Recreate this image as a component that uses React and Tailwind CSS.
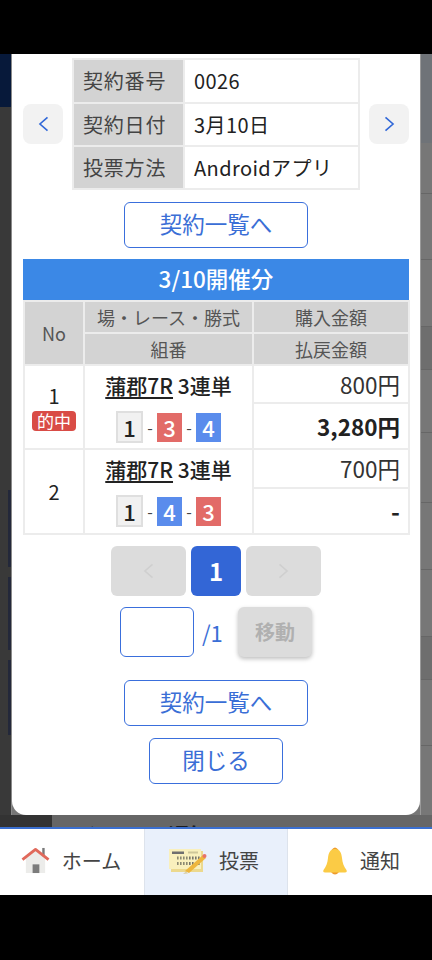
const FONT = "font-['Noto_Sans_CJK_JP','Noto_Sans',sans-serif]";

function Chevron({ dir, className }) {
  return (
    <svg viewBox="0 0 12 18" className={className} fill="none" stroke="currentColor" strokeWidth="1.8">
      <path d={dir === 'left' ? 'M10.5 1.5 L2 9 L10.5 16.5' : 'M1.5 1.5 L10 9 L1.5 16.5'} />
    </svg>
  );
}

function HomeIcon() {
  return (
    <svg viewBox="0 0 30 28" className="w-[29px] h-[27px]">
      <rect x="22" y="1" width="2.5" height="9" fill="#7a7a7a" />
      <path d="M5 12 L15 3 L25 12 V27 H5 Z" fill="#ececea" />
      <path d="M1.5 13 L15 2.5 L28.5 13" fill="none" stroke="#e0695b" strokeWidth="3" strokeLinejoin="round" />
      <rect x="12" y="18" width="7" height="9" fill="#7c7c7c" />
    </svg>
  );
}

function TicketIcon() {
  const cols = [9, 12, 15, 18, 21, 24, 27, 30];
  return (
    <svg viewBox="0 0 38 26" className="w-[38px] h-[26px]">
      <rect x="2" y="3" width="32" height="21" fill="#ecd98e" />
      <rect x="0" y="1" width="32" height="20" fill="#f9f0bd" />
      <rect x="3" y="3.5" width="12" height="2.5" fill="#6f6f6f" />
      <rect x="19" y="3.5" width="10" height="2" fill="#cfc79a" />
      {cols.map((x) => (
        <rect key={x} x={x - 1} y="8.5" width="1.6" height="3" fill={x < 20 ? '#8c8a72' : '#77756a'} />
      ))}
      {cols.map((x) => (
        <rect key={x} x={x - 1} y="14" width="1.6" height="3" fill={x < 20 ? '#8c8a72' : '#77756a'} />
      ))}
      <path d="M34 7 L37 10 L20 25 L16 23 Z" fill="#eeb63e" />
      <path d="M17 23.5 L14 26 L19 25.5 Z" fill="#d9cfa6" />
      <circle cx="35.5" cy="8" r="2" fill="#e8736a" />
    </svg>
  );
}

function BellIcon() {
  return (
    <svg viewBox="0 0 26 30" className="w-[26px] h-[30px]">
      <path d="M9 26 Q13 31 17 26 Z" fill="#ee9b2d" />
      <path d="M9.5 4 Q13 -1 16.5 4 Z" fill="#ee9b2d" />
      <path d="M13 3 C8 3 6.5 7 6 12 C5.6 17 4 21 1.5 24 Q0.6 26.5 3 26.5 H23 Q25.4 26.5 24.5 24 C22 21 20.4 17 20 12 C19.5 7 18 3 13 3 Z" fill="#fbcb45" />
    </svg>
  );
}

function OutlineButton({ className, children }) {
  return (
    <button className={`block mx-auto pb-[3px] border-[1.5px] border-[#3a6fdc] rounded-[6px] bg-white text-[22.5px] leading-none text-[#3a6ed6] ${className}`}>
      {children}
    </button>
  );
}

function InfoRow({ label, value, height }) {
  return (
    <tr className={height}>
      <th className="border-2 border-[#ececec] bg-[#d3d3d3] pl-[9px] text-left font-normal text-[#444] tracking-[0.8px]">{label}</th>
      <td className="border-2 border-[#ececec] pl-[9px] text-[#222] tracking-[0.4px]">{value}</td>
    </tr>
  );
}

function Num({ n, kind }) {
  const styles = {
    white: 'w-[27px] h-[32px] bg-[#f1f1f1] border-2 border-[#dfdfdf] text-[#222]',
    red: 'w-[25px] h-[29px] bg-[#e26b68] text-white',
    blue: 'w-[25px] h-[29px] bg-[#5a8cec] text-white',
  };
  return <span className={`flex items-center justify-center text-[22px] leading-none font-medium ${styles[kind]}`}>{n}</span>;
}

function Combo({ nums }) {
  const kinds = { 1: 'white', 3: 'red', 4: 'blue' };
  return (
    <div className="flex items-center justify-center h-[32px]">
      <Num n={nums[0]} kind={kinds[nums[0]]} />
      <span className="w-[14px] text-center text-[16px] text-[#444] leading-none">-</span>
      <Num n={nums[1]} kind={kinds[nums[1]]} />
      <span className="w-[14px] text-center text-[16px] text-[#444] leading-none">-</span>
      <Num n={nums[2]} kind={kinds[nums[2]]} />
    </div>
  );
}

const cell = 'border-2 border-[#ececec]';
const head = 'border-2 border-[#ececec] bg-[#d3d3d3] font-normal text-[18px] leading-none text-[#555]';

function RaceRows({ no, hit, nums, buy, pay, payBold, topHeight }) {
  return (
    <>
      <tr className={topHeight}>
        <td rowSpan={2} className={`${cell} text-center align-middle text-[#222] text-[20px] leading-none`}>
          <div className={hit ? 'pt-[3px]' : ''}>{no}</div>
          {hit && (
            <div className="mx-auto mt-[5px] w-[44px] h-[20px] rounded-[4px] bg-[#d94c46] text-white text-[17px] leading-[20px]">的中</div>
          )}
        </td>
        <td rowSpan={2} className={`${cell} align-top`}>
          <div className="flex flex-col items-center pt-[5px] gap-[12px]">
            <div className="text-[21px] leading-[28px] font-medium text-[#222] whitespace-nowrap">
              <span className="underline underline-offset-[3px]">蒲郡7R</span> 3連単
            </div>
            <Combo nums={nums} />
          </div>
        </td>
        <td className={`${cell} text-right pr-[8px] text-[22.5px] leading-none text-[#333]`}>{buy}</td>
      </tr>
      <tr className="h-[46px]">
        <td className={`${cell} text-right pr-[8px] leading-none text-[#222] font-bold ${payBold ? 'text-[22.5px]' : 'text-[24px]'}`}>{pay}</td>
      </tr>
    </>
  );
}

export default function App() {
  return (
    <div className={`${FONT} w-[432px] h-[960px] bg-black flex flex-col overflow-hidden`}>
      <div className="h-[54px] shrink-0 bg-black" />

      <div className="flex h-[761px] shrink-0 bg-[#777]">
        {/* dimmed page, left edge */}
        <div className="w-[12px] shrink-0 flex flex-col bg-[#393939] border-r border-[#8a8a8a]">
          <div className="h-[53px] bg-[#07193a]" />
          <div className="h-[383px]" />
          <div className="h-[77px] w-[3px] ml-auto bg-[#23283a]" />
          <div className="h-[10px]" />
          <div className="h-[73px] w-[3px] ml-auto bg-[#23283a]" />
          <div className="h-[10px]" />
          <div className="h-[75px] w-[3px] ml-auto bg-[#23283a]" />
        </div>

        {/* modal */}
        <div className="w-[408px] shrink-0 bg-white rounded-b-[14px] px-[11px] pt-[4px]">
          <div className="flex items-center justify-between">
            <button className="w-[40px] h-[40px] rounded-[8px] bg-[#f2f2f2] flex items-center justify-center text-[#3168d8]">
              <Chevron dir="left" className="w-[11px] h-[16px]" />
            </button>
            <table className="w-[288px] table-fixed border-collapse text-[20px] leading-none">
              <colgroup>
                <col className="w-[111px]" />
                <col />
              </colgroup>
              <tbody>
                <InfoRow label="契約番号" value="0026" height="h-[44px]" />
                <InfoRow label="契約日付" value="3月10日" height="h-[43px]" />
                <InfoRow label="投票方法" value="Androidアプリ" height="h-[43px]" />
              </tbody>
            </table>
            <button className="w-[40px] h-[40px] rounded-[8px] bg-[#f2f2f2] flex items-center justify-center text-[#3168d8]">
              <Chevron dir="right" className="w-[11px] h-[16px]" />
            </button>
          </div>

          <OutlineButton className="w-[184px] h-[46px] mt-[12px]">契約一覧へ</OutlineButton>

          <div className="mt-[11px] h-[41px] pb-[3px] bg-[#3b88e6] text-white text-[22.5px] font-medium flex items-center justify-center leading-none">
            3/10開催分
          </div>

          <table className="w-[385px] table-fixed border-collapse">
            <colgroup>
              <col className="w-[60px]" />
              <col className="w-[169px]" />
              <col className="w-[156px]" />
            </colgroup>
            <thead>
              <tr className="h-[32px]">
                <th rowSpan={2} className={head}>No</th>
                <th className={head}>場・レース・勝式</th>
                <th className={head}>購入金額</th>
              </tr>
              <tr className="h-[32px]">
                <th className={head}>組番</th>
                <th className={head}>払戻金額</th>
              </tr>
            </thead>
            <tbody>
              <RaceRows no="1" hit nums={[1, 3, 4]} buy="800円" pay="3,280円" payBold topHeight="h-[38px]" />
              <RaceRows no="2" nums={[1, 4, 3]} buy="700円" pay="-" topHeight="h-[39px]" />
            </tbody>
          </table>

          <div className="flex justify-center gap-[5px] mt-[11px]">
            <div className="w-[75px] h-[50px] rounded-[6px] bg-[#dcdcdc] flex items-center justify-center text-[#cfcfcf]">
              <Chevron dir="left" className="w-[11px] h-[16px]" />
            </div>
            <div className="w-[50px] h-[50px] rounded-[6px] bg-[#3366d6] flex items-center justify-center text-white text-[24px] font-bold leading-none">1</div>
            <div className="w-[75px] h-[50px] rounded-[6px] bg-[#dcdcdc] flex items-center justify-center text-[#cfcfcf]">
              <Chevron dir="right" className="w-[11px] h-[16px]" />
            </div>
          </div>

          <div className="flex items-center mt-[11px] pl-[97px]">
            <div className="w-[74px] h-[50px] rounded-[6px] border-[1.5px] border-[#3a6fdc] bg-white" />
            <span className="ml-[8px] w-[36px] text-[22px] leading-none text-[#3a6ed6]">/1</span>
            <div className="w-[74px] h-[50px] rounded-[6px] bg-[#dcdcdc] shadow-[0_2px_4px_rgba(0,0,0,0.25)] flex items-center justify-center text-[20px] font-bold leading-none text-[#b0b0b0]">移動</div>
          </div>

          <OutlineButton className="w-[184px] h-[46px] mt-[23px]">契約一覧へ</OutlineButton>
          <OutlineButton className="w-[134px] h-[46px] mt-[12px]">閉じる</OutlineButton>
        </div>

        {/* dimmed page, right edge */}
        <div className="w-[12px] shrink-0 flex flex-col bg-[#777] border-l border-[#9a9a9a]">
          <div className="h-[89px] bg-[#6f7378]" />
          <div className="h-[51px] border-b border-[#666]" />
          <div className="h-[66px] border-b border-[#666]" />
          <div className="h-[67px] border-b border-[#666]" />
          <div className="h-[43px] bg-[#6e6e6e] border-b border-[#666]" />
          <div className="h-[63px] border-b border-[#666]" />
          <div className="h-[70px] border-b border-[#666]" />
          <div className="h-[67px] border-b border-[#666]" />
          <div className="h-[67px] border-b border-[#666]" />
          <div className="h-[43px] bg-[#6e6e6e] border-b border-[#666]" />
          <div className="h-[66px] border-b border-[#666]" />
        </div>
      </div>

      {/* dimmed page below the modal */}
      <div className="h-[12px] shrink-0 flex overflow-hidden bg-[#666]">
        <div className="w-[52px] bg-[#333]" />
        <div className="ml-[23px] pt-[6px] text-[22px] leading-[26px] font-bold text-[#1c1c1c] whitespace-nowrap">イベント 通知</div>
      </div>

      <nav className="h-[68px] shrink-0 grid grid-cols-[144px_144px_144px] bg-white border-t-2 border-[#3a6fd0]">
        <div className="flex items-center justify-center gap-[12px] pb-[3px] pr-[2px]">
          <HomeIcon />
          <span className="text-[20px] leading-none text-[#444]">ホーム</span>
        </div>
        <div className="flex items-center justify-center gap-[12px] pb-[3px] pr-[4px] bg-[#e9f0fb] border-x border-[#dde3ec]">
          <TicketIcon />
          <span className="text-[20px] leading-none text-[#444]">投票</span>
        </div>
        <div className="flex items-center justify-center gap-[12px] pb-[3px] pl-[2px]">
          <BellIcon />
          <span className="text-[20px] leading-none text-[#444]">通知</span>
        </div>
      </nav>

      <div className="flex-1 bg-black" />
    </div>
  );
}
